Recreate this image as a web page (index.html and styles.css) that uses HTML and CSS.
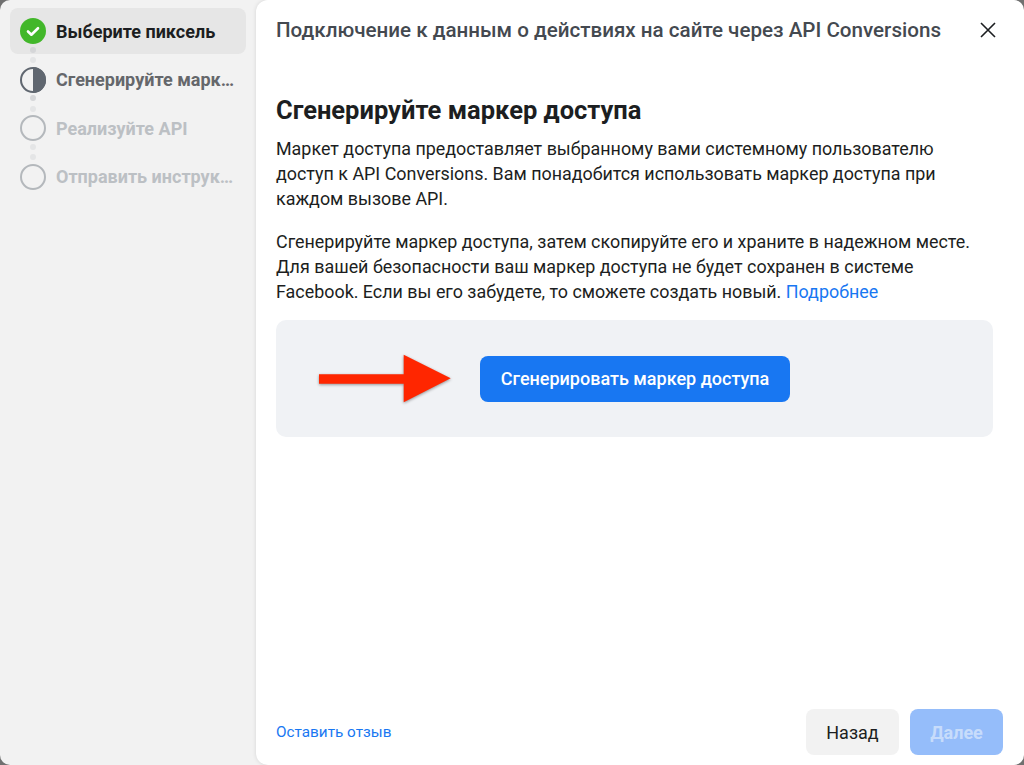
FILE: index.html
```html
<!DOCTYPE html>
<html lang="ru">
<head>
<meta charset="utf-8">
<title>API Conversions</title>
<link rel="stylesheet" href="styles.css">
</head>
<body>
<div class="shell">
  <aside class="side">
    <div class="step active">
      <svg class="ico" viewBox="0 0 26 26"><circle cx="13" cy="13" r="13" fill="#42b72a"/><path d="M8 13.5l3.4 3.2L18 10.2" fill="none" stroke="#fff" stroke-width="2.6" stroke-linecap="round" stroke-linejoin="round"/></svg>
      <span class="label dark">Выберите пиксель</span>
    </div>
    <div class="dots"><i class="d1"></i><i class="d2"></i></div>
    <div class="step">
      <svg class="ico" viewBox="0 0 26 26"><circle cx="13" cy="13" r="12" fill="none" stroke="#606770" stroke-width="2"/><path d="M13 0a13 13 0 0 1 0 26z" fill="#606770"/></svg>
      <span class="label mid">Сгенерируйте марк…</span>
    </div>
    <div class="dots"><i class="d1"></i><i class="d2"></i></div>
    <div class="step">
      <svg class="ico" viewBox="0 0 26 26"><circle cx="13" cy="13" r="12" fill="none" stroke="#b4b8bc" stroke-width="2"/></svg>
      <span class="label light">Реализуйте API</span>
    </div>
    <div class="dots"><i class="d2 first"></i><i class="d2"></i></div>
    <div class="step">
      <svg class="ico" viewBox="0 0 26 26"><circle cx="13" cy="13" r="12" fill="none" stroke="#b4b8bc" stroke-width="2"/></svg>
      <span class="label light">Отправить инструк…</span>
    </div>
  </aside>
  <main class="panel">
    <header class="head">
      <h1 class="title">Подключение к данным о действиях на сайте через API Conversions</h1>
      <svg class="close" viewBox="0 0 16 16"><path d="M1 1l14 14M15 1L1 15" stroke="#1c1e21" stroke-width="1.6" fill="none"/></svg>
    </header>
    <div class="body">
      <h2 class="heading">Сгенерируйте маркер доступа</h2>
      <p class="para">Маркет доступа предоставляет выбранному вами системному пользователю<br>доступ к API Conversions. Вам понадобится использовать маркер доступа при<br>каждом вызове API.</p>
      <p class="para second">Сгенерируйте маркер доступа, затем скопируйте его и храните в надежном месте.<br>Для вашей безопасности ваш маркер доступа не будет сохранен в системе<br>Facebook. Если вы его забудете, то сможете создать новый. <a class="link">Подробнее</a></p>
      <div class="box">
        <svg class="arrow" viewBox="0 0 140 54"><path d="M0 22.200h84.700V2.800l47 23.400-47 24V31.800H0z" fill="#ff2600"/></svg>
        <button class="gen">Сгенерировать маркер доступа</button>
      </div>
    </div>
    <footer class="foot">
      <a class="feedback">Оставить отзыв</a>
      <div class="btns">
        <button class="btn back">Назад</button>
        <button class="btn next">Далее</button>
      </div>
    </footer>
  </main>
</div>
</body>
</html>
```
FILE: styles.css
```css
* { box-sizing: border-box; }
html, body { margin: 0; height: 100%; }
body { background: #f2f2f2; font-family: Roboto, "Liberation Sans", sans-serif; overflow: hidden; }
.shell { position: relative; overflow: hidden; display: flex; width: 1024px; height: 765px; padding-left: 10px; }
.shell::after { content: ""; position: absolute; inset: 0; border-radius: 10px; box-shadow: 0 0 0 12px #707070; pointer-events: none; }
.side { width: 236px; padding-top: 8px; flex: none; }
.step { display: flex; align-items: center; height: 46px; padding-left: 10px; border-radius: 8px; }
.step.active { background: #e6e6e6; }
.ico { width: 26px; height: 26px; flex: none; margin-right: 10px; }
.label { font-size: 18px; font-weight: 700; white-space: nowrap; }
.dark { color: #1c1e21; }
.mid { color: #65676b; }
.light { color: #bcc0c4; }
.dots { height: 2.67px; position: relative; }
.dots i { position: absolute; left: 20px; width: 6px; height: 6px; border-radius: 50%; }
.dots .d1 { top: -7.5px; background: #d5d6d8; }
.dots .d2 { top: 3px; background: #e4e5e6; }
.dots .first { top: -7.5px; }
.panel { flex: none; width: 768px; margin-left: 10px; background: #fff; border-radius: 12px 0 0 12px; display: flex; flex-direction: column; padding: 0 20px; box-shadow: 0 0 4px rgba(0,0,0,.12); height: 765px; }
.head { display: flex; align-items: center; justify-content: space-between; height: 60px; padding-right: 8px; }
.title { margin: 0; font-size: 20.6px; font-weight: 500; color: #444950; white-space: nowrap; }
.close { width: 16px; height: 16px; flex: none; }
.body { flex: 1; padding: 36px 11px 0 0; }
.heading { margin: 0 0 12px; font-size: 25.5px; line-height: 28px; font-weight: 700; color: #1c1e21; }
.para { margin: 0; font-size: 17.9px; line-height: 25px; color: #1c1e21; white-space: nowrap; }
.second { margin-top: 18px; }
.link, .feedback { color: #1877f2; }
.box { margin-top: 16px; height: 117px; background: #f0f2f5; border-radius: 10px; display: flex; align-items: center; padding-left: 43px; }
.arrow { width: 140px; height: 54px; flex: none; filter: drop-shadow(0 1px 1.5px rgba(0,0,0,.4)); margin-right: 21px; }
.gen { width: 310px; height: 46px; padding: 0; border: 0; border-radius: 8px; background: #1877f2; color: #fff; font: 500 18px Roboto, sans-serif; }
.foot { display: flex; justify-content: space-between; align-items: center; padding-bottom: 10px; }
.feedback { font-size: 15.3px; }
.btns { display: flex; gap: 11px; margin-right: 1px; }
.btn { width: 93px; height: 46px; padding: 0; border: 0; border-radius: 8px; font: 400 18px Roboto, sans-serif; }
.back { background: #f2f2f2; color: #1c1e21; }
.next { background: #95bdfa; color: #c7dcfb; font-weight: 700; }
```
